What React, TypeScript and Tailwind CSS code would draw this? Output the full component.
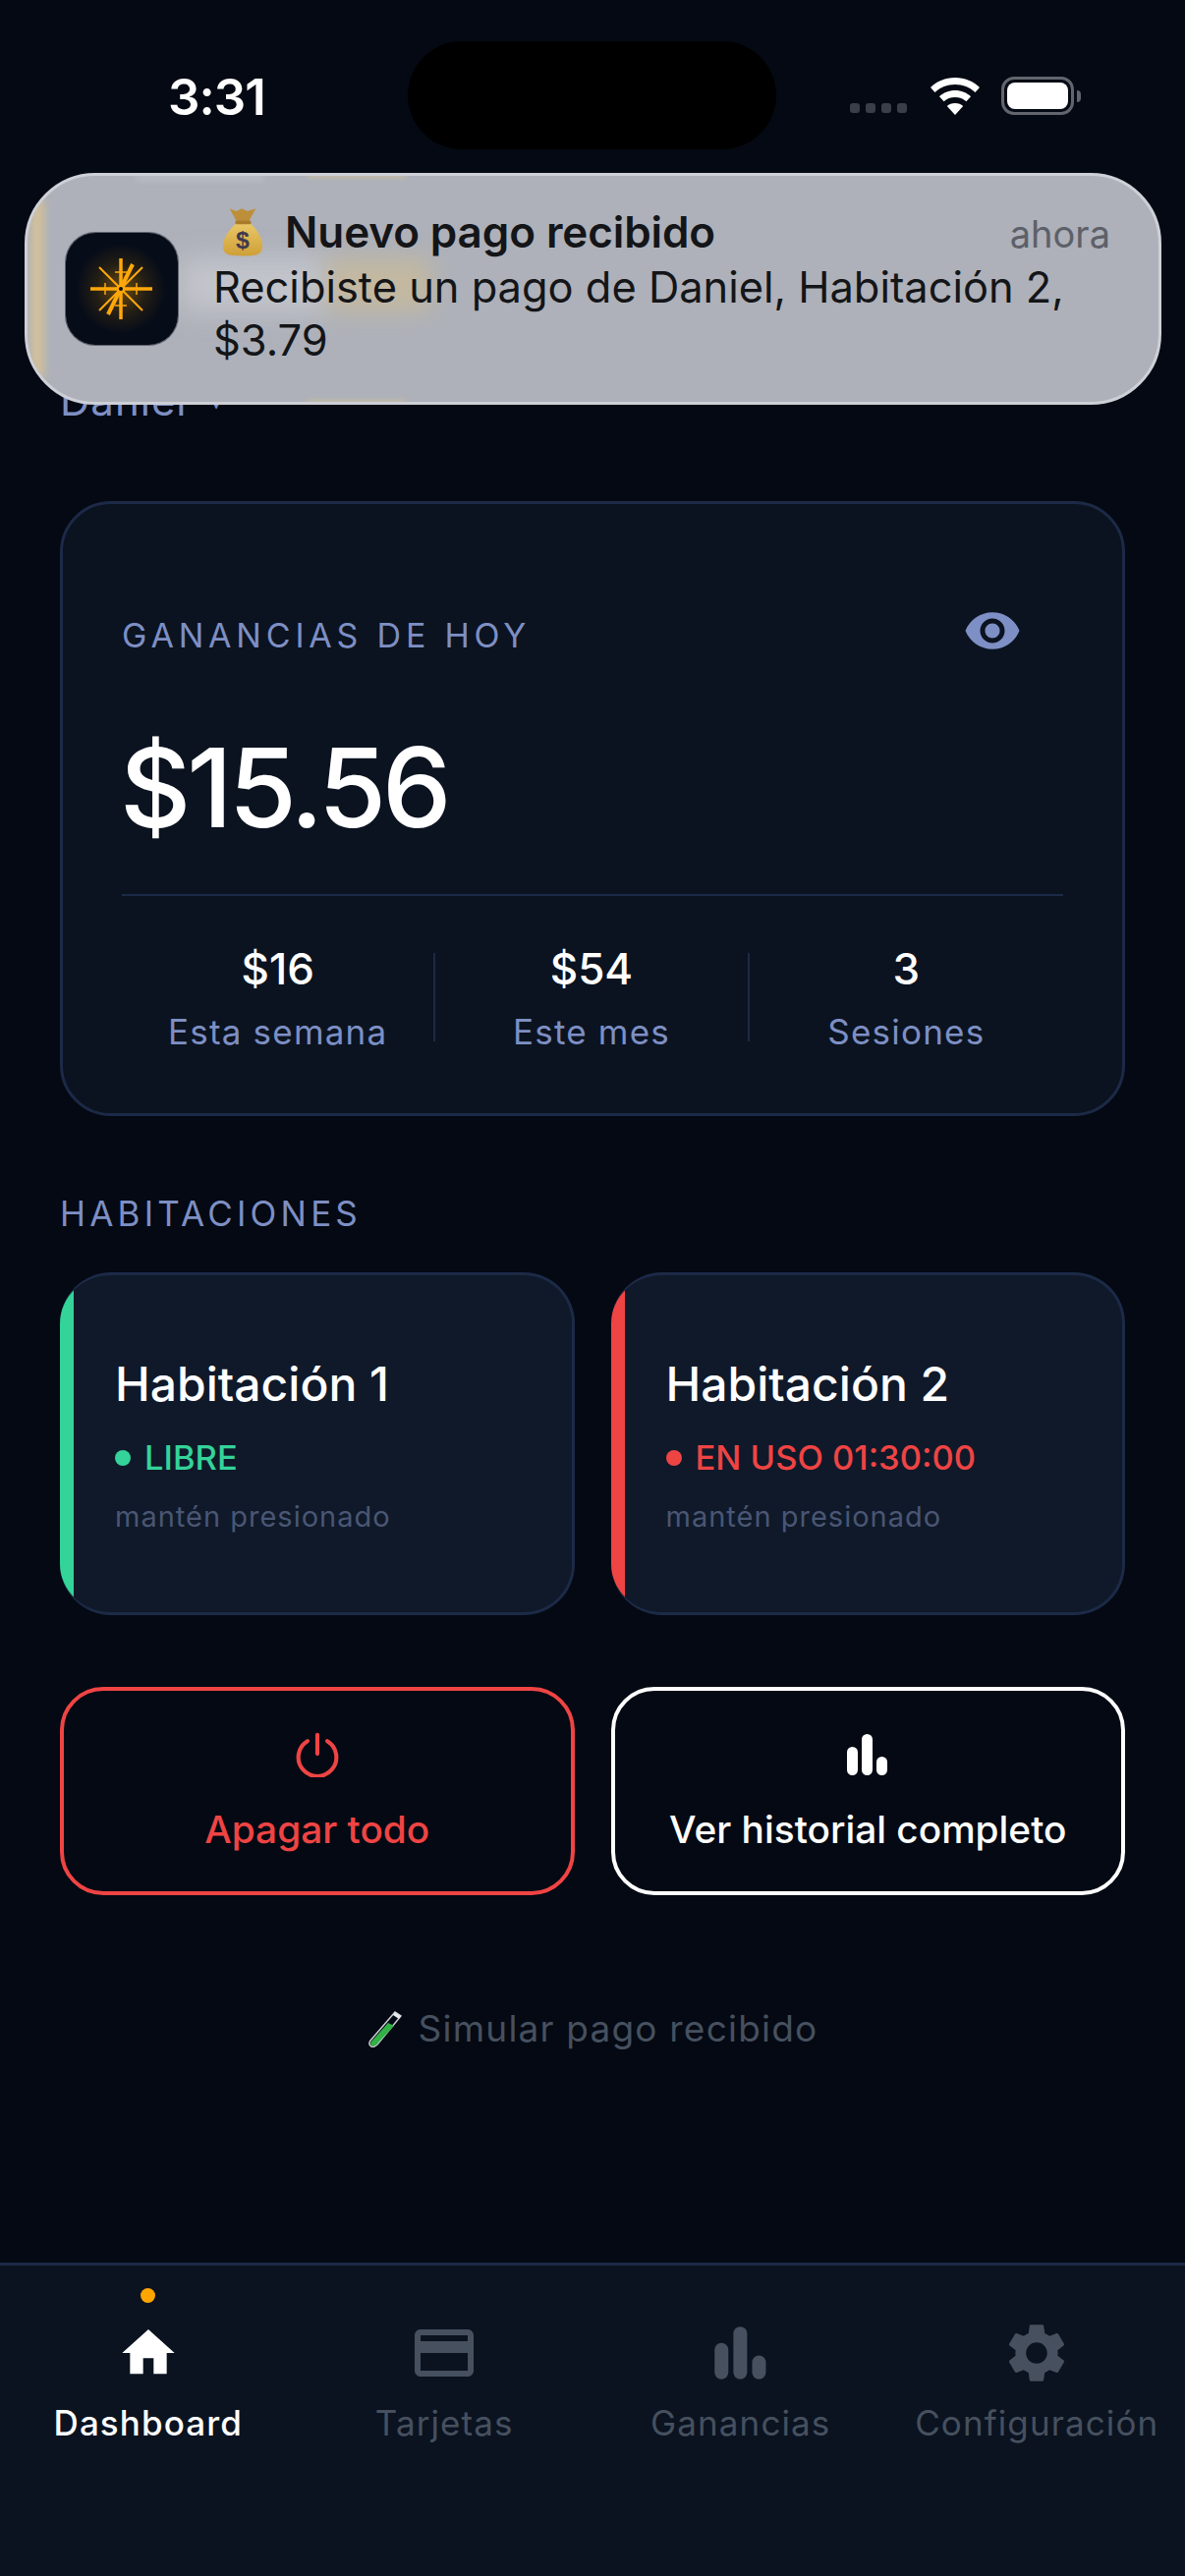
import type { ReactNode } from 'react'

function Wifi() {
  return (
    <svg width="52" height="38" viewBox="0 0 52 38" fill="#fff">
      <path d="M26 0C16 0 7.500 3.800 1 10l4.500 5C11 9.800 18 7 26 7s15 2.800 20.500 8l4.500-5C44.500 3.800 36 0 26 0z" />
      <path d="M26 13c-6.500 0-12 2.400-16 6.200l4.600 5C17.600 21.500 21.500 20 26 20s8.400 1.500 11.400 4.200l4.600-5C38 15.400 32.500 13 26 13z" />
      <path d="M26 26c-3.400 0-6.200 1.200-8.200 3L26 38l8.200-9c-2-1.800-4.800-3-8.200-3z" />
    </svg>
  )
}

function Battery() {
  return (
    <div className="flex items-center gap-[3px]">
      <div className="flex h-[39px] w-[74px] rounded-[13px] border-[3px] border-[#62656d] p-[3px]">
        <div className="flex-1 rounded-[8px] bg-white" />
      </div>
      <div className="h-[12px] w-[4px] rounded-r-full bg-[#62656d]" />
    </div>
  )
}

function StatusBar() {
  return (
    <div className="flex h-[176px] shrink-0 items-start pt-[42px]">
      <div className="ml-[171px] w-[244px] pt-[27px] font-['Inter',sans-serif] text-[51px] leading-[60px] font-semibold tracking-[-1px] text-white">
        3:31
      </div>
      <div className="h-[110px] w-[375px] rounded-[55px] bg-black" />
      <div className="ml-[75px] flex items-center pt-[36px]">
        <div className="mt-[24px] flex gap-[6px]">
          <div className="h-[10px] w-[10px] rounded-[3px] bg-[#3a3e48]" />
          <div className="h-[10px] w-[10px] rounded-[3px] bg-[#3a3e48]" />
          <div className="h-[10px] w-[10px] rounded-[3px] bg-[#3a3e48]" />
          <div className="h-[10px] w-[10px] rounded-[3px] bg-[#3a3e48]" />
        </div>
        <div className="ml-[23px] flex">
          <Wifi />
        </div>
        <div className="ml-[21px]">
          <Battery />
        </div>
      </div>
    </div>
  )
}

function AppIcon() {
  return (
    <svg width="114" height="114" viewBox="0 0 114 114" className="rounded-[30px] shadow-[0_0_0_1px_rgba(60,66,80,0.7)]">
      <defs>
        <radialGradient id="glow" cx="0.5" cy="0.5" r="0.5">
          <stop offset="0" stopColor="#ffa500" stopOpacity="0.42" />
          <stop offset="0.55" stopColor="#ffa500" stopOpacity="0.12" />
          <stop offset="1" stopColor="#ffa500" stopOpacity="0" />
        </radialGradient>
      </defs>
      <rect width="114" height="114" fill="#060c18" />
      <circle cx="56" cy="57" r="46" fill="url(#glow)" />
      <g stroke="#ffa80a" fill="none" strokeLinecap="butt">
        <path d="M25 57H88" strokeWidth="3.500" />
        <path d="M56 26V88" strokeWidth="3.500" />
        <path d="M34 35L78 79M34 79L78 35" strokeWidth="2" />
        <path d="M43 83L68 32" strokeWidth="4" />
        <path d="M40 51V63M72 51V63M50 40H62M50 74H62" strokeWidth="1.500" />
      </g>
      <circle cx="56" cy="57" r="4.500" fill="#ffa80a" />
      <circle cx="56" cy="57" r="2" fill="#060c18" />
    </svg>
  )
}

function MoneyBag() {
  return (
    <svg width="42" height="52" viewBox="0 0 44 52">
      <defs>
        <linearGradient id="bag" x1="0" y1="0" x2="0" y2="1">
          <stop offset="0" stopColor="#e9c766" />
          <stop offset="1" stopColor="#cf9f38" />
        </linearGradient>
      </defs>
      <path d="M8 1l7 3 6-3 6 3 9-3-7 13-1 4H16l-1-4z" fill="#bd8f3a" />
      <path d="M15 17h15c7 6 13 15 13 24 0 7-4 9-8 10-8 1-18 1-26 0-4-1-8-3-8-10 0-9 7-18 14-24z" fill="url(#bag)" />
      <rect x="14" y="14" width="17" height="4" rx="2" fill="#a97b2a" />
      <text x="22" y="44" textAnchor="middle" fontFamily="'Liberation Sans',sans-serif" fontSize="26" fontWeight="700" fill="#3e3a4e">
        $
      </text>
    </svg>
  )
}

function TestTube() {
  return (
    <svg width="36" height="38" viewBox="0 0 36 38">
      <path d="M28 2L3 31c-2 3-1 5 1 6s4 0 6-2L34 6z" fill="none" stroke="#c9ced2" strokeWidth="1.500" />
      <path d="M21 13L4 32c-1.500 2-1 3.500.5 4.300 1.500.7 3 .2 4.500-1.300L27 16z" fill="#2fb344" />
      <path d="M28 2l6 4-2 3-6-4z" fill="#e7e9ea" />
    </svg>
  )
}

function Notification() {
  return (
    <div className="absolute top-[176px] left-[25px] flex h-[236px] w-[1157px] items-start overflow-hidden rounded-[72px] border-[3px] border-[#cdd0d6] bg-[#aeb1b9] font-['Inter',sans-serif]">
      {/* streaks of the blurred page under the glass */}
      <div className="absolute top-[24px] bottom-[24px] left-[4px] w-[12px] bg-[#e3c78e] opacity-80 blur-[5px]" />
      <div className="absolute top-[-2px] left-[285px] h-[4px] w-[100px] bg-[#d8c494] opacity-60 blur-[2px]" />
      <div className="absolute bottom-[-2px] left-[285px] h-[4px] w-[100px] bg-[#d8c494] opacity-60 blur-[2px]" />
      <div className="absolute top-[-1px] left-[110px] h-[5px] w-[130px] bg-[#d0d2d7] opacity-50 blur-[3px]" />
      <div className="absolute top-[84px] left-[155px] h-[54px] w-[150px] bg-[#c8cad0] opacity-80 blur-[14px]" />
      <div className="absolute top-[84px] left-[305px] h-[54px] w-[105px] bg-[#c9bb9a] opacity-80 blur-[12px]" />
      <div className="relative mt-[58px] ml-[39px] shrink-0">
        <AppIcon />
      </div>
      <div className="relative ml-[37px] flex-1 pt-[28px] pr-[28px]">
        <div className="flex items-center">
          <div className="ml-[8px] flex">
            <MoneyBag />
          </div>
          <div className="ml-[22px] text-[44px] leading-[54px] font-semibold tracking-[-0.1px] text-[#141518]">Nuevo pago recibido</div>
          <div className="mt-[4px] mr-[21px] ml-auto text-[38px] leading-[54px] text-[#5d6069]">ahora</div>
        </div>
        <div className="ml-[-1px] text-[43.400px] leading-[54px] text-[#141518]">
          Recibiste un pago de Daniel, Habitación 2,
          <br />
          $3.79
        </div>
      </div>
    </div>
  )
}

function Stat({ value, label, last }: { value: string; label: string; last?: boolean }) {
  return (
    <div className={last ? 'flex h-[90px] flex-col items-center' : 'flex h-[90px] flex-col items-center border-r-2 border-[#1c2a47]'}>
      <div className="mt-[-9px] text-[44px] leading-[50px] font-medium text-white">{value}</div>
      <div className="mt-[19px] text-[35px] leading-[40px] tracking-[1.200px] text-[#7d8fc4]">{label}</div>
    </div>
  )
}

function RoomCard({
  name,
  status,
  stripeClass,
  statusClass,
  dotClass,
}: {
  name: string
  status: string
  stripeClass: string
  statusClass: string
  dotClass: string
}) {
  return (
    <div className="flex h-[349px] overflow-hidden rounded-[52px] border-[3px] border-l-0 border-[#1c2a47] bg-[#0f1929]">
      <div className={`w-[14px] shrink-0 ${stripeClass}`} />
      <div className="pt-[83px] pl-[42px]">
        <div className="text-[48px] leading-[56px] font-medium text-white">{name}</div>
        <div className={`mt-[25px] flex items-center gap-[14px] text-[34.500px] leading-[44px] font-medium ${statusClass}`}>
          <div className={`h-[16px] w-[16px] rounded-full ${dotClass}`} />
          {status}
        </div>
        <div className="mt-[20px] text-[29px] leading-[36px] tracking-[1px] text-[#4a5674]">mantén presionado</div>
      </div>
    </div>
  )
}

function ActionButton({ icon, label, className }: { icon: ReactNode; label: string; className: string }) {
  return (
    <button className={`flex h-[212px] flex-col items-center rounded-[44px] border-[4px] pt-[42px] ${className}`}>
      <div className="flex h-[46px] items-center">{icon}</div>
      <span className="mt-[29px] text-[38.800px] leading-[48px] font-medium">{label}</span>
    </button>
  )
}

function Bars({ size, color }: { size: number; color: string }) {
  return (
    <svg width={size} height={size} viewBox="0 0 44 44" fill={color}>
      <rect x="1" y="14" width="11" height="29" rx="5.500" />
      <rect x="16" y="1" width="11" height="42" rx="5.500" />
      <rect x="31" y="24" width="11" height="19" rx="5.500" />
    </svg>
  )
}

function NavItem({ label, icon, active }: { label: string; icon: ReactNode; active?: boolean }) {
  return (
    <div className="relative flex flex-col items-center pt-[57px]">
      {active && <div className="absolute top-[23px] h-[15px] w-[15px] rounded-full bg-[#ffa500]" />}
      <div className="flex h-[64px] items-center">{icon}</div>
      <div
        className={
          active
            ? 'mt-[17px] text-[35px] leading-[44px] font-medium tracking-[1.100px] text-white'
            : 'mt-[17px] text-[35px] leading-[44px] tracking-[1.100px] text-[#46505f]'
        }
      >
        {label}
      </div>
    </div>
  )
}

export default function App() {
  return (
    <div className="relative flex h-[2622px] w-[1206px] flex-col overflow-hidden bg-[#040913] font-['Inter',sans-serif]">
      <StatusBar />
      <div className="flex flex-1 flex-col px-[61px]">
        <div className="mt-[209px] flex h-[46px] items-center text-[42px] leading-[46px] tracking-[1px] text-[#7d8fc4]">
          Daniel
          <span className="mt-[4px] ml-[24px] text-[20px]">▾</span>
        </div>

        <div className="mt-[79px] h-[626px] rounded-[52px] border-[3px] border-[#1c2a47] bg-[#0b1320] px-[60px] pt-[104px]">
          <div className="flex items-center justify-between pr-[42px]">
            <div className="text-[34px] leading-[42px] tracking-[4.800px] text-[#7d8fc4]">GANANCIAS DE HOY</div>
            <svg width="60" height="60" viewBox="0 0 24 24" fill="#7d8fc4" className="mt-[-5px] mb-[5px]">
              <path d="M12 4.500C7 4.500 2.730 7.610 1 12c1.730 4.390 6 7.500 11 7.500s9.270-3.110 11-7.500c-1.730-4.390-6-7.500-11-7.500zM12 17c-2.760 0-5-2.240-5-5s2.240-5 5-5 5 2.240 5 5-2.240 5-5 5zm0-8c-1.660 0-3 1.340-3 3s1.340 3 3 3 3-1.340 3-3-1.340-3-3-3z" />
            </svg>
          </div>
          <div className="mt-[59px] ml-[-2px] text-[112px] leading-[130px] font-medium tracking-[-4px] text-white">$15.56</div>
          <div className="mt-[44px] border-t-2 border-[#1c2a47]" />
          <div className="mt-[58px] grid grid-cols-3">
            <Stat value="$16" label="Esta semana" />
            <Stat value="$54" label="Este mes" />
            <Stat value="3" label="Sesiones" last />
          </div>
        </div>

        <div className="mt-[77px] text-[35px] leading-[44px] tracking-[4.200px] text-[#7d8fc4]">HABITACIONES</div>

        <div className="mt-[38px] grid grid-cols-2 gap-[37px]">
          <RoomCard name="Habitación 1" status="LIBRE" stripeClass="bg-[#34d399]" statusClass="text-[#34d399]" dotClass="bg-[#34d399]" />
          <RoomCard name="Habitación 2" status="EN USO 01:30:00" stripeClass="bg-[#ef4444]" statusClass="text-[#ef4444]" dotClass="bg-[#ef4444]" />
        </div>

        <div className="mt-[73px] grid grid-cols-2 gap-[37px]">
          <ActionButton
            className="border-[#ef4444] text-[#ef4444]"
            label="Apagar todo"
            icon={
              <svg width="46" height="46" viewBox="0 0 50 50" fill="none" stroke="#ef4444" strokeWidth="4.500" strokeLinecap="round">
                <path d="M25 3V24" />
                <path d="M14 10a21 21 0 1 0 22 0" />
              </svg>
            }
          />
          <ActionButton className="border-white text-white" label="Ver historial completo" icon={<Bars size={44} color="#fff" />} />
        </div>

        <div className="mt-[112px] flex items-center justify-center gap-[16px] text-[37px] leading-[48px] tracking-[1.200px] text-[#46505f]">
          <TestTube />
          Simular pago recibido
        </div>
      </div>

      <div className="grid h-[319px] shrink-0 grid-cols-4 border-t-[3px] border-[#1c2a47] bg-[#0b1320]">
        <NavItem
          active
          label="Dashboard"
          icon={
            <svg width="64" height="64" viewBox="0 0 24 24" fill="#fff">
              <path d="M10 20v-6h4v6h5v-8h3L12 3 2 12h3v8z" />
            </svg>
          }
        />
        <NavItem
          label="Tarjetas"
          icon={
            <svg width="72" height="72" viewBox="0 0 24 24" fill="#46505f">
              <path d="M20 4H4c-1.110 0-1.990.89-1.990 2L2 18c0 1.110.89 2 2 2h16c1.110 0 2-.89 2-2V6c0-1.110-.89-2-2-2zm0 14H4v-6h16v6zm0-10H4V6h16v2z" />
            </svg>
          }
        />
        <NavItem label="Ganancias" icon={<Bars size={56} color="#46505f" />} />
        <NavItem
          label="Configuración"
          icon={
            <svg width="72" height="72" viewBox="0 0 24 24" fill="#46505f">
              <path d="M19.140 12.940c.04-.3.06-.61.06-.94 0-.32-.02-.64-.07-.94l2.030-1.580c.18-.14.23-.41.12-.61l-1.920-3.320c-.12-.22-.37-.29-.59-.22l-2.390.96c-.5-.38-1.030-.7-1.620-.94l-.36-2.540c-.04-.24-.24-.41-.48-.41h-3.840c-.24 0-.43.17-.47.41l-.36 2.540c-.59.24-1.130.57-1.620.94l-2.390-.96c-.22-.08-.47 0-.59.22L2.740 8.870c-.12.21-.08.47.12.61l2.030 1.580c-.05.3-.09.63-.09.94s.02.64.07.94l-2.030 1.580c-.18.14-.23.41-.12.61l1.920 3.320c.12.22.37.29.59.22l2.390-.96c.5.38 1.030.7 1.620.94l.36 2.540c.05.24.24.41.48.41h3.840c.24 0 .44-.17.47-.41l.36-2.540c.59-.24 1.130-.56 1.620-.94l2.390.96c.22.08.47 0 .59-.22l1.920-3.320c.12-.22.07-.47-.12-.61l-2.010-1.580zM12 15.600c-1.980 0-3.600-1.620-3.600-3.600s1.620-3.600 3.600-3.600 3.600 1.620 3.600 3.600-1.620 3.600-3.600 3.600z" />
            </svg>
          }
        />
      </div>

      <Notification />
    </div>
  )
}
